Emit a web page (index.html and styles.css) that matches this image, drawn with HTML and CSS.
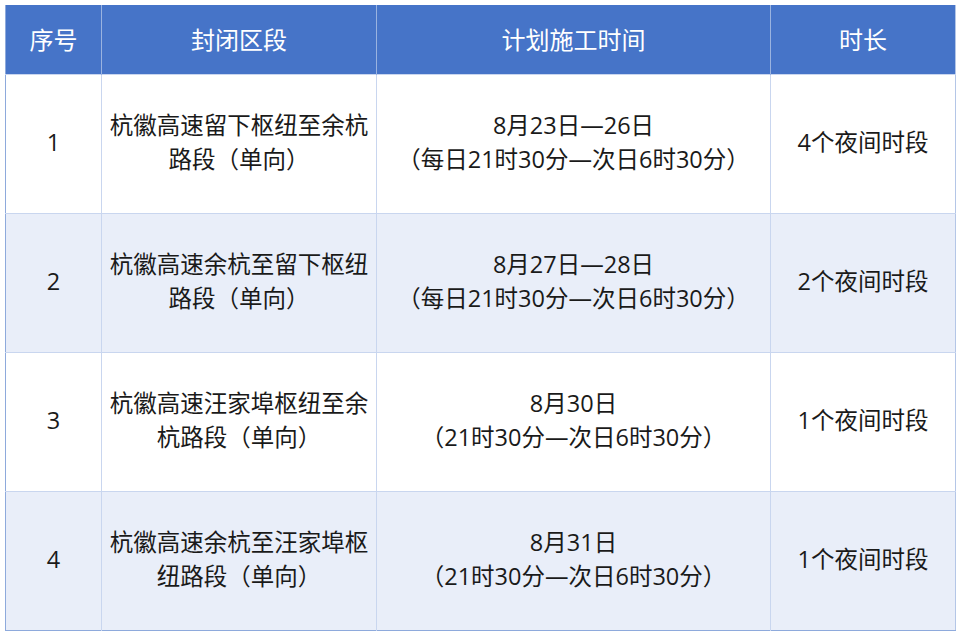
FILE: index.html
```html
<!DOCTYPE html>
<html lang="zh">
<head>
<meta charset="utf-8">
<link rel="stylesheet" href="styles.css">
</head>
<body>
<table class="plan">
  <colgroup>
    <col class="c1"><col class="c2"><col class="c3"><col class="c4">
  </colgroup>
  <thead>
    <tr><th>序号</th><th>封闭区段</th><th>计划施工时间</th><th>时长</th></tr>
  </thead>
  <tbody>
    <tr>
      <td>1</td>
      <td>杭徽高速留下枢纽至余杭<br>路段（单向）</td>
      <td>8月23日—26日<br>（每日21时30分—次日6时30分）</td>
      <td>4个夜间时段</td>
    </tr>
    <tr class="alt">
      <td>2</td>
      <td>杭徽高速余杭至留下枢纽<br>路段（单向）</td>
      <td>8月27日—28日<br>（每日21时30分—次日6时30分）</td>
      <td>2个夜间时段</td>
    </tr>
    <tr>
      <td>3</td>
      <td>杭徽高速汪家埠枢纽至余<br>杭路段（单向）</td>
      <td>8月30日<br>（21时30分—次日6时30分）</td>
      <td>1个夜间时段</td>
    </tr>
    <tr class="alt">
      <td>4</td>
      <td>杭徽高速余杭至汪家埠枢<br>纽路段（单向）</td>
      <td>8月31日<br>（21时30分—次日6时30分）</td>
      <td>1个夜间时段</td>
    </tr>
  </tbody>
</table>
</body>
</html>
```

FILE: styles.css
```css
html, body {
  margin: 0;
  padding: 0;
  background: #ffffff;
}
body {
  padding: 5px;
  font-family: "Open Sans", "Noto Sans CJK SC", sans-serif;
}
.plan {
  border-collapse: collapse;
  table-layout: fixed;
  width: 950px;
  border-left: 1px solid #8eaadc;
  border-bottom: 1px solid #8eaadc;
  border-right: 1px solid #b4c6e7;
}
.c1 { width: 96px; }
.c2 { width: 275px; }
.c3 { width: 394px; }
.c4 { width: 185px; }
.plan th {
  background: #4674c8;
  color: #ffffff;
  font-weight: normal;
  font-size: 24px;
  height: 66px;
  padding: 0 0 3px 0;
  border-left: 1px solid #9ab3e0;
  text-align: center;
  vertical-align: middle;
}
.plan th:first-child { border-left: none; }
.plan td {
  font-size: 23.5px;
  line-height: 34px;
  color: #1a1a1a;
  height: 133px;
  padding: 0 0 5px 0;
  text-align: center;
  vertical-align: middle;
  border-left: 1px solid #c9d6ef;
  border-top: 1px solid #c9d6ef;
}
.plan td:first-child { border-left: none; }
.plan tr.alt td { background: #e9eef9; }
```
